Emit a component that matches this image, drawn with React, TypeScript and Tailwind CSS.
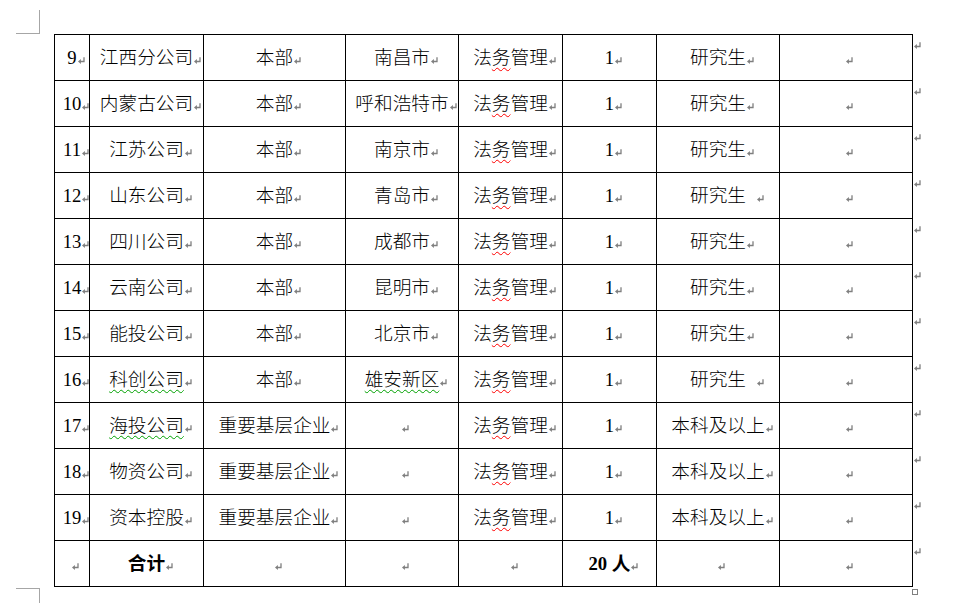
import React from "react";

type Cell = {
  t: React.ReactNode;
  bold?: boolean;
  space?: boolean;
};

const Mark = ({ space }: { space?: boolean }) => (
  <svg
    width="7"
    height="7"
    viewBox="0 0 7 7"
    className={
      space
        ? "inline-block ml-[11px] mr-[-18px] align-baseline"
        : "inline-block ml-[1px] mr-[-8px] align-baseline"
    }
  >
    <path d="M6 0.3V4.5H2" stroke="#7f7f7f" strokeWidth="1.3" fill="none" />
    <path d="M0 4.5L2.9 2.1V6.9Z" fill="#7f7f7f" />
  </svg>
);

const EmptyMark = () => (
  <svg width="7" height="7" viewBox="0 0 7 7" className="inline-block mr-[-7px] align-baseline">
    <path d="M6 0.3V4.5H2" stroke="#7f7f7f" strokeWidth="1.3" fill="none" />
    <path d="M0 4.5L2.9 2.1V6.9Z" fill="#7f7f7f" />
  </svg>
);

const Law = () => (
  <>
    法
    <span className="underline decoration-wavy decoration-[#ff0000] decoration-[1px] underline-offset-[3px]">
      务
    </span>
    管理
  </>
);

const Green = ({ children }: { children: React.ReactNode }) => (
  <span className="underline decoration-wavy decoration-[#00a000] decoration-[1px] underline-offset-[3px]">
    {children}
  </span>
);

const std = (
  n: string,
  co: React.ReactNode,
  type: string,
  city: React.ReactNode,
  edu: string,
  eduSpace?: boolean
): Cell[] => [
  { t: n },
  { t: co },
  { t: type },
  { t: city },
  { t: <Law /> },
  { t: "1" },
  { t: edu, space: eduSpace },
  { t: "" },
];

const rows: Cell[][] = [
  std("9", "江西分公司", "本部", "南昌市", "研究生"),
  std("10", "内蒙古公司", "本部", "呼和浩特市", "研究生"),
  std("11", "江苏公司", "本部", "南京市", "研究生"),
  std("12", "山东公司", "本部", "青岛市", "研究生", true),
  std("13", "四川公司", "本部", "成都市", "研究生"),
  std("14", "云南公司", "本部", "昆明市", "研究生"),
  std("15", "能投公司", "本部", "北京市", "研究生"),
  std("16", <Green>科创公司</Green>, "本部", <Green>雄安新区</Green>, "研究生", true),
  std("17", <Green>海投公司</Green>, "重要基层企业", "", "本科及以上"),
  std("18", "物资公司", "重要基层企业", "", "本科及以上"),
  std("19", "资本控股", "重要基层企业", "", "本科及以上"),
  [
    { t: "" },
    { t: "合计", bold: true },
    { t: "" },
    { t: "" },
    { t: "" },
    { t: "20 人", bold: true },
    { t: "" },
    { t: "" },
  ],
];

export default function App() {
  return (
    <div
      className="relative w-[958px] h-[603px] bg-white overflow-hidden text-black"
      style={{ fontFamily: '"Liberation Serif", "Noto Sans CJK SC", serif' }}
    >
      {/* page corner marks */}
      <div className="absolute left-[16px] top-[10px] w-[24px] h-[24px] border-r border-b border-[#a6a6a6]" />
      <div className="absolute left-[16px] top-[588px] w-[24px] h-[20px] border-r border-t border-[#a6a6a6]" />

      <div className="flex pl-[54px] pt-[34px]">
        <div className="grid grid-cols-[35px_114px_142px_113px_104px_94px_123px_133px] border-l border-t border-black">
          {rows.map((r, ri) =>
            r.map((c, ci) => (
              <div
                key={`${ri}-${ci}`}
                className={`h-[46px] border-r border-b border-black flex items-center justify-center whitespace-nowrap text-[18.67px] leading-normal ${
                  c.bold ? "font-bold" : "font-light"
                }`}
              >
                <span className="whitespace-nowrap">
                  {c.t === "" ? (
                    <EmptyMark />
                  ) : (
                    <>
                      {c.t}
                      <Mark space={c.space} />
                    </>
                  )}
                </span>
              </div>
            ))
          )}
        </div>
        <div className="flex flex-col pt-[1px]">
          {rows.map((_, i) => (
            <div key={i} className="h-[46px] pl-[1px] pt-[7px]">
              <svg width="7" height="7" viewBox="0 0 7 7" className="block">
                <path d="M6 0.3V4.5H2" stroke="#7f7f7f" strokeWidth="1.3" fill="none" />
                <path d="M0 4.5L2.9 2.1V6.9Z" fill="#7f7f7f" />
              </svg>
            </div>
          ))}
        </div>
      </div>

      {/* table resize handle */}
      <div className="absolute left-[912px] top-[589px] w-[6px] h-[6px] border border-[#808080] bg-white" />
    </div>
  );
}
